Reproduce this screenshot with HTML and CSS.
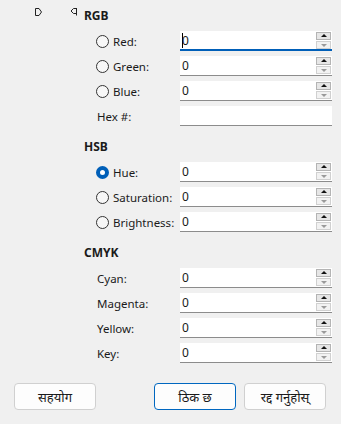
FILE: index.html
```html
<!DOCTYPE html>
<html lang="ne">
<head>
    <meta charset="UTF-8">
    <meta name="viewport" content="width=device-width, initial-scale=1.0">
    <title>रङ छान्नुहोस्</title>
    <link rel="stylesheet" href="styles.css">
</head>
<body>
    <div class="dialog">
        <div class="top-row">
            <svg class="marker marker-right" width="8" height="9" viewBox="0 0 8 9">
                <path d="M0.5 0.5 H4 L6.5 4 L4 7.5 H0.5 Z" fill="none" stroke="#222" stroke-width="1"/>
            </svg>
            <svg class="marker marker-left" width="8" height="9" viewBox="0 0 8 9">
                <path d="M6.5 0 V7.5 M6.5 0.5 H3.5 L1 3 L3.5 5.5 H6.5" fill="none" stroke="#222" stroke-width="1"/>
            </svg>
            <div class="group-title">RGB</div>
        </div>

        <!-- RGB -->
        <div class="fields">
            <label class="field-label"><span class="radio"></span>Red:</label>
            <div class="spin focused">
                <span class="value"><span class="caret"></span>0</span>
                <div class="spin-buttons"><span class="up"></span><span class="down"></span></div>
            </div>

            <label class="field-label"><span class="radio"></span>Green:</label>
            <div class="spin">
                <span class="value">0</span>
                <div class="spin-buttons"><span class="up"></span><span class="down"></span></div>
            </div>

            <label class="field-label"><span class="radio"></span>Blue:</label>
            <div class="spin">
                <span class="value">0</span>
                <div class="spin-buttons"><span class="up"></span><span class="down"></span></div>
            </div>

            <label class="field-label plain">Hex #:</label>
            <div class="text-box"></div>
        </div>

        <!-- HSB -->
        <div class="group-title section">HSB</div>
        <div class="fields">
            <label class="field-label"><span class="radio checked"></span>Hue:</label>
            <div class="spin">
                <span class="value">0</span>
                <div class="spin-buttons"><span class="up"></span><span class="down"></span></div>
            </div>

            <label class="field-label"><span class="radio"></span>Saturation:</label>
            <div class="spin">
                <span class="value">0</span>
                <div class="spin-buttons"><span class="up"></span><span class="down"></span></div>
            </div>

            <label class="field-label"><span class="radio"></span>Brightness:</label>
            <div class="spin">
                <span class="value">0</span>
                <div class="spin-buttons"><span class="up"></span><span class="down"></span></div>
            </div>
        </div>

        <!-- CMYK -->
        <div class="group-title section">CMYK</div>
        <div class="fields">
            <label class="field-label plain">Cyan:</label>
            <div class="spin">
                <span class="value">0</span>
                <div class="spin-buttons"><span class="up"></span><span class="down"></span></div>
            </div>

            <label class="field-label plain">Magenta:</label>
            <div class="spin">
                <span class="value">0</span>
                <div class="spin-buttons"><span class="up"></span><span class="down"></span></div>
            </div>

            <label class="field-label plain">Yellow:</label>
            <div class="spin">
                <span class="value">0</span>
                <div class="spin-buttons"><span class="up"></span><span class="down"></span></div>
            </div>

            <label class="field-label plain">Key:</label>
            <div class="spin">
                <span class="value">0</span>
                <div class="spin-buttons"><span class="up"></span><span class="down"></span></div>
            </div>
        </div>

        <div class="buttons">
            <button class="btn">सहयोग</button>
            <div class="buttons-right">
                <button class="btn default">ठिक छ</button>
                <button class="btn">रद्द गर्नुहोस्</button>
            </div>
        </div>
    </div>
</body>
</html>
```

FILE: styles.css
```css
body {
    margin: 0;
    background-color: #f0f0f0;
    font-family: "Noto Sans", "Noto Sans Devanagari", sans-serif;
    font-size: 11.5px;
    color: #1a1a1a;
}
.dialog {
    padding-top: 8px;
}
.top-row {
    display: flex;
    align-items: flex-start;
    height: 16px;
    padding-left: 35px;
}
.marker {
    display: block;
}
.marker-left {
    margin-left: 27px;
}
.top-row .group-title {
    margin-left: 6px;
    padding-left: 0;
}
.group-title {
    font-weight: bold;
    font-size: 12px;
    line-height: 16px;
    height: 16px;
    padding-left: 84px;
}
.group-title.section {
    margin-top: 13px;
}
.fields {
    display: grid;
    grid-template-columns: 84px 152px;
    grid-auto-rows: 20px;
    row-gap: 5px;
    margin-top: 7px;
    margin-left: 96px;
}
.field-label {
    display: flex;
    align-items: center;
    gap: 4px;
    white-space: nowrap;
}
.field-label.plain {
    padding-left: 1px;
}
.radio {
    width: 11px;
    height: 11px;
    border: 1px solid #333;
    border-radius: 50%;
    background-color: #f7f7f7;
    flex: none;
}
.radio.checked {
    width: 5px;
    height: 5px;
    border: 4px solid #005fb8;
    background-color: #fff;
}
.spin,
.text-box {
    display: flex;
    align-items: center;
    background-color: #fff;
    border-bottom: 1px solid #8c8c8c;
    box-sizing: border-box;
}
.spin.focused {
    border-bottom: 2px solid #005fb8;
}
.value {
    flex: 1;
    padding-left: 2px;
    display: flex;
    align-items: center;
    font-size: 12px;
}
.caret {
    width: 1px;
    height: 15px;
    background-color: #000;
    margin-right: -1px;
}
.spin-buttons {
    display: flex;
    flex-direction: column;
    gap: 1px;
    margin-right: 1px;
}
.spin-buttons span {
    width: 13px;
    height: 6px;
    border: 1px solid #b4b4b4;
    background-color: #e6e6e6;
    position: relative;
}
.spin-buttons .up::after,
.spin-buttons .down::after {
    content: "";
    position: absolute;
    left: 4px;
    border-left: 3px solid transparent;
    border-right: 3px solid transparent;
}
.spin-buttons .up::after {
    top: 1px;
    border-bottom: 3px solid #111;
}
.spin-buttons .down::after {
    top: 2px;
    border-top: 3px solid #9a9a9a;
}
.spin-buttons .down {
    background-color: #f2f2f2;
    border-color: #d0d0d0;
}
.buttons {
    display: flex;
    justify-content: space-between;
    margin-top: 20px;
    padding: 0 15px 0 14px;
}
.buttons-right {
    display: flex;
    gap: 8px;
}
.btn {
    width: 82px;
    height: 27px;
    font-family: "Noto Sans", "Noto Sans Devanagari", sans-serif;
    font-size: 13px;
    color: #1a1a1a;
    background-color: #fdfdfd;
    border: 1px solid #d0d0d0;
    border-radius: 4px;
    padding: 0;
}
.btn.default {
    border-color: #0067c0;
}
```
